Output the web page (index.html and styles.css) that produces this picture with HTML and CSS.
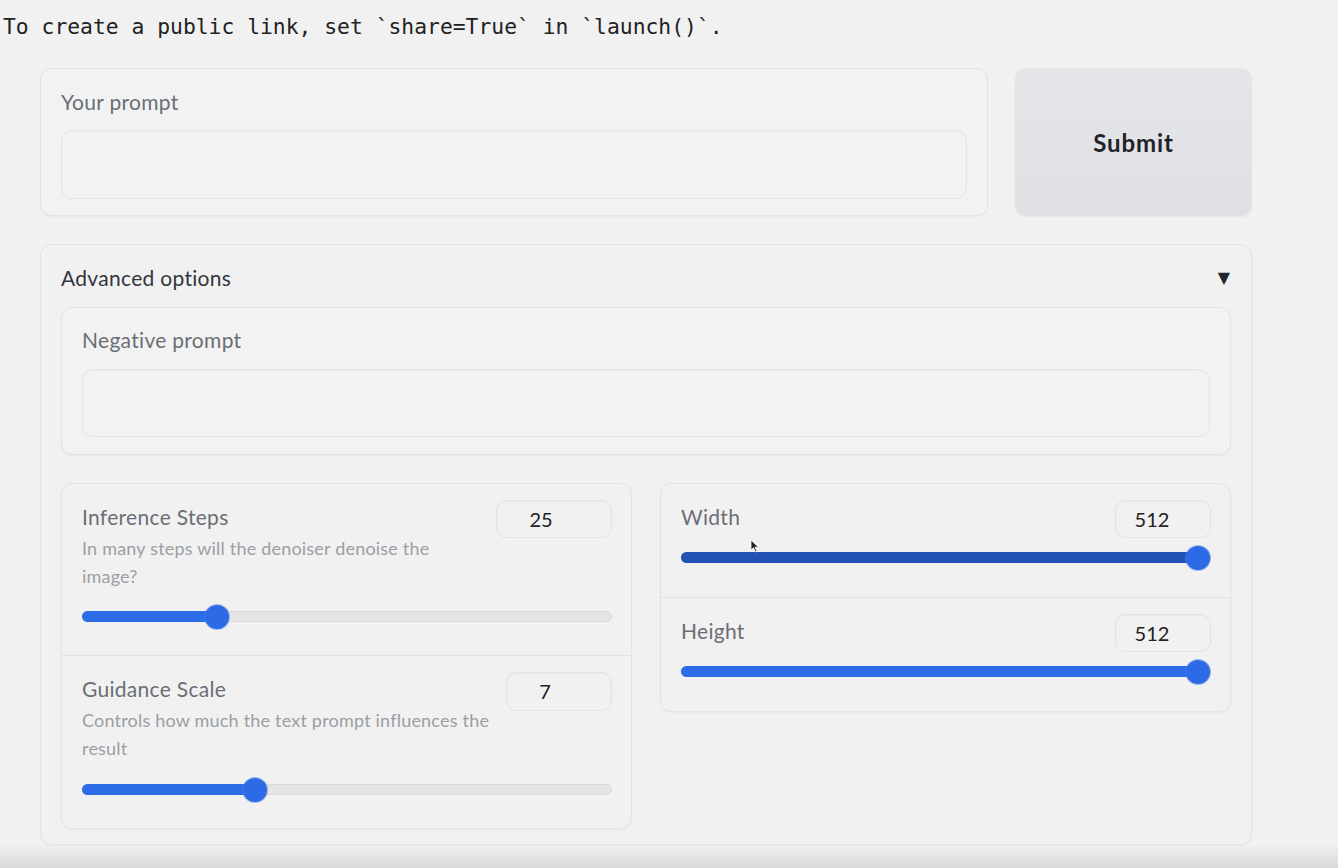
FILE: index.html
```html
<!DOCTYPE html>
<html>
<head>
<meta charset="utf-8">
<link rel="stylesheet" href="styles.css">
</head>
<body>
<div class="notice">To create a public link, set `share=True` in `launch()`.</div>
<div class="app">
  <div class="row-top">
    <div class="card prompt-card">
      <div class="label">Your prompt</div>
      <div class="textbox"></div>
    </div>
    <button class="submit">Submit</button>
  </div>
  <div class="accordion">
    <div class="acc-head">
      <span class="acc-title">Advanced options</span>
      <span class="acc-arrow">▼</span>
    </div>
    <div class="card neg-card">
      <div class="label">Negative prompt</div>
      <div class="textbox neg-box"></div>
    </div>
    <div class="columns">
      <div class="col col-left">
        <div class="slider-block">
          <div class="head">
            <div class="head-text">
              <div class="label">Inference Steps</div>
              <div class="info info-steps">In many steps will the denoiser denoise the image?</div>
            </div>
            <div class="num num-steps">25</div>
          </div>
          <div class="track track-info" style="--p:0.243"><div class="fill"></div><div class="thumb"></div></div>
        </div>
        <div class="slider-block divided">
          <div class="head">
            <div class="head-text">
              <div class="label">Guidance Scale</div>
              <div class="info info-guid">Controls how much the text prompt influences the result</div>
            </div>
            <div class="num num-guid">7</div>
          </div>
          <div class="track track-info2" style="--p:0.318"><div class="fill"></div><div class="thumb"></div></div>
        </div>
      </div>
      <div class="col col-right">
        <div class="slider-block">
          <div class="head">
            <div class="head-text">
              <div class="label">Width</div>
            </div>
            <div class="num num-wh">512</div>
          </div>
          <div class="track track-plain" style="--p:1"><div class="fill fill-hover"></div><div class="thumb"></div>
            <svg class="cursor" width="10" height="14" viewBox="0 0 10 14"><path d="M1 1 L1 11 L3.5 8.8 L5.5 13 L7 12.3 L5 8.2 L8.5 8.2 Z" fill="#222" stroke="#fff" stroke-width="0.8"/></svg>
          </div>
        </div>
        <div class="slider-block divided">
          <div class="head">
            <div class="head-text">
              <div class="label">Height</div>
            </div>
            <div class="num num-wh">512</div>
          </div>
          <div class="track track-plain" style="--p:1"><div class="fill"></div><div class="thumb"></div></div>
        </div>
      </div>
    </div>
  </div>
</div>
<div class="bottom-band"></div>
</body>
</html>
```
FILE: styles.css
```css
html, body {
  margin: 0;
  padding: 0;
  background: #f1f1f1;
  height: 868px;
  overflow: hidden;
}
body {
  font-family: "Lato", "Liberation Sans", sans-serif;
}
.notice {
  font-family: "DejaVu Sans Mono", monospace;
  font-size: 21.35px;
  line-height: 28px;
  color: #222;
  padding: 13px 0 0 3px;
  height: 27px;
  white-space: nowrap;
}
.app {
  margin: 28px 0 0 40px;
  width: 1212px;
}
.row-top {
  display: flex;
  gap: 27px;
  height: 148px;
}
.card {
  border: 1px solid #e3e3e3;
  border-radius: 11px;
  background: #f2f2f2;
  box-shadow: 0 1px 2px rgba(0,0,0,0.04);
  box-sizing: border-box;
}
.prompt-card {
  width: 948px;
  padding: 20px 20px 0 20px;
}
.label {
  font-size: 21px;
  letter-spacing: 0.3px;
  line-height: 26px;
  color: #6b6e75;
}
.textbox {
  margin-top: 15px;
  height: 69px;
  border: 1px solid #e4e4e4;
  border-radius: 11px;
  background: #f2f2f2;
  box-shadow: inset 0 1px 2px rgba(0,0,0,0.03);
  box-sizing: border-box;
}
.submit {
  width: 237px;
  height: 148px;
  border: none;
  border-radius: 11px;
  background: linear-gradient(180deg, #e5e6e9, #dfe0e3);
  box-shadow: 0 1px 2px rgba(0,0,0,0.05);
  font-family: "Lato", "Liberation Sans", sans-serif;
  font-weight: 700;
  font-size: 24px;
  letter-spacing: 0.9px;
  color: #1f2329;
  padding: 0;
}
.accordion {
  margin-top: 28px;
  height: 601px;
  border: 1px solid #e4e4e4;
  border-radius: 11px;
  box-sizing: border-box;
  padding: 19px 20px 0 20px;
  box-shadow: 0 1px 2px rgba(0,0,0,0.04);
}
.acc-head {
  display: flex;
  justify-content: space-between;
  align-items: center;
  height: 26px;
}
.acc-title {
  font-size: 21px;
  letter-spacing: 0.3px;
  color: #33363c;
}
.acc-arrow {
  font-size: 16px;
  color: #1f2630;
  font-family: "DejaVu Sans", sans-serif;
  margin-right: 1px;
}
.neg-card {
  margin-top: 17px;
  height: 148px;
  padding: 19px 20px 0 20px;
}
.neg-box {
  margin-top: 16px;
  height: 68px;
}
.columns {
  display: flex;
  gap: 28px;
  margin-top: 28px;
  align-items: flex-start;
}
.col {
  flex: 1;
  border: 1px solid #e3e3e3;
  border-radius: 11px;
  box-sizing: border-box;
  box-shadow: 0 1px 2px rgba(0,0,0,0.04);
}
.slider-block {
  padding: 16px 19px 34px 20px;
}
.col-left .slider-block {
  padding-bottom: 33px;
}
.slider-block.divided {
  border-top: 1px solid #e1e1e1;
}
.head {
  display: flex;
  justify-content: space-between;
  align-items: flex-start;
}
.head-text {
  flex: 1;
}
.head .label {
  line-height: 32px;
  margin-top: 1px;
}
.info {
  font-size: 18px;
  letter-spacing: 0.2px;
  line-height: 28px;
  color: #9b9ea5;
  margin-top: 1px;
}
.info-steps { max-width: 390px; }
.info-guid { max-width: 440px; }
.num {
  height: 38px;
  box-sizing: border-box;
  border: 1px solid #e3e3e3;
  border-radius: 10px;
  font-size: 20px;
  line-height: 36px;
  color: #222;
  text-align: center;
  box-shadow: inset 0 1px 2px rgba(0,0,0,0.03);
}
.num-steps { width: 116px; padding-right: 26px; }
.num-guid { width: 106px; height: 39px; padding-right: 28px; }
.num-wh { width: 96px; padding-right: 22px; }
.track {
  position: relative;
  height: 11px;
  border-radius: 6px;
  background: #e5e5e5;
  border: 1px solid #d9d9d9;
  box-sizing: border-box;
}
.track-info { margin-top: 21px; }
.track-info2 { margin-top: 22px; }
.track-plain { margin-top: 14px; }
.fill {
  position: absolute;
  left: -1px;
  top: -1px;
  bottom: -1px;
  width: calc(12px + (100% - 24px) * var(--p));
  border-radius: 6px;
  background: #2c6ce6;
}
.fill-hover {
  background: #2352b6;
}
.thumb {
  position: absolute;
  top: 50%;
  left: calc(12px + (100% - 24px) * var(--p));
  width: 24px;
  height: 24px;
  margin-left: -12px;
  margin-top: -12px;
  border-radius: 50%;
  background: #2d6be6;
  box-shadow: 0 0 0 1px rgba(80,130,240,0.5);
}
.cursor {
  position: absolute;
  left: 68px;
  top: -14px;
}
.bottom-band {
  position: absolute;
  left: 0;
  right: 0;
  top: 846px;
  height: 22px;
  background: linear-gradient(180deg, #efefef, #d9d9d9);
}
```
